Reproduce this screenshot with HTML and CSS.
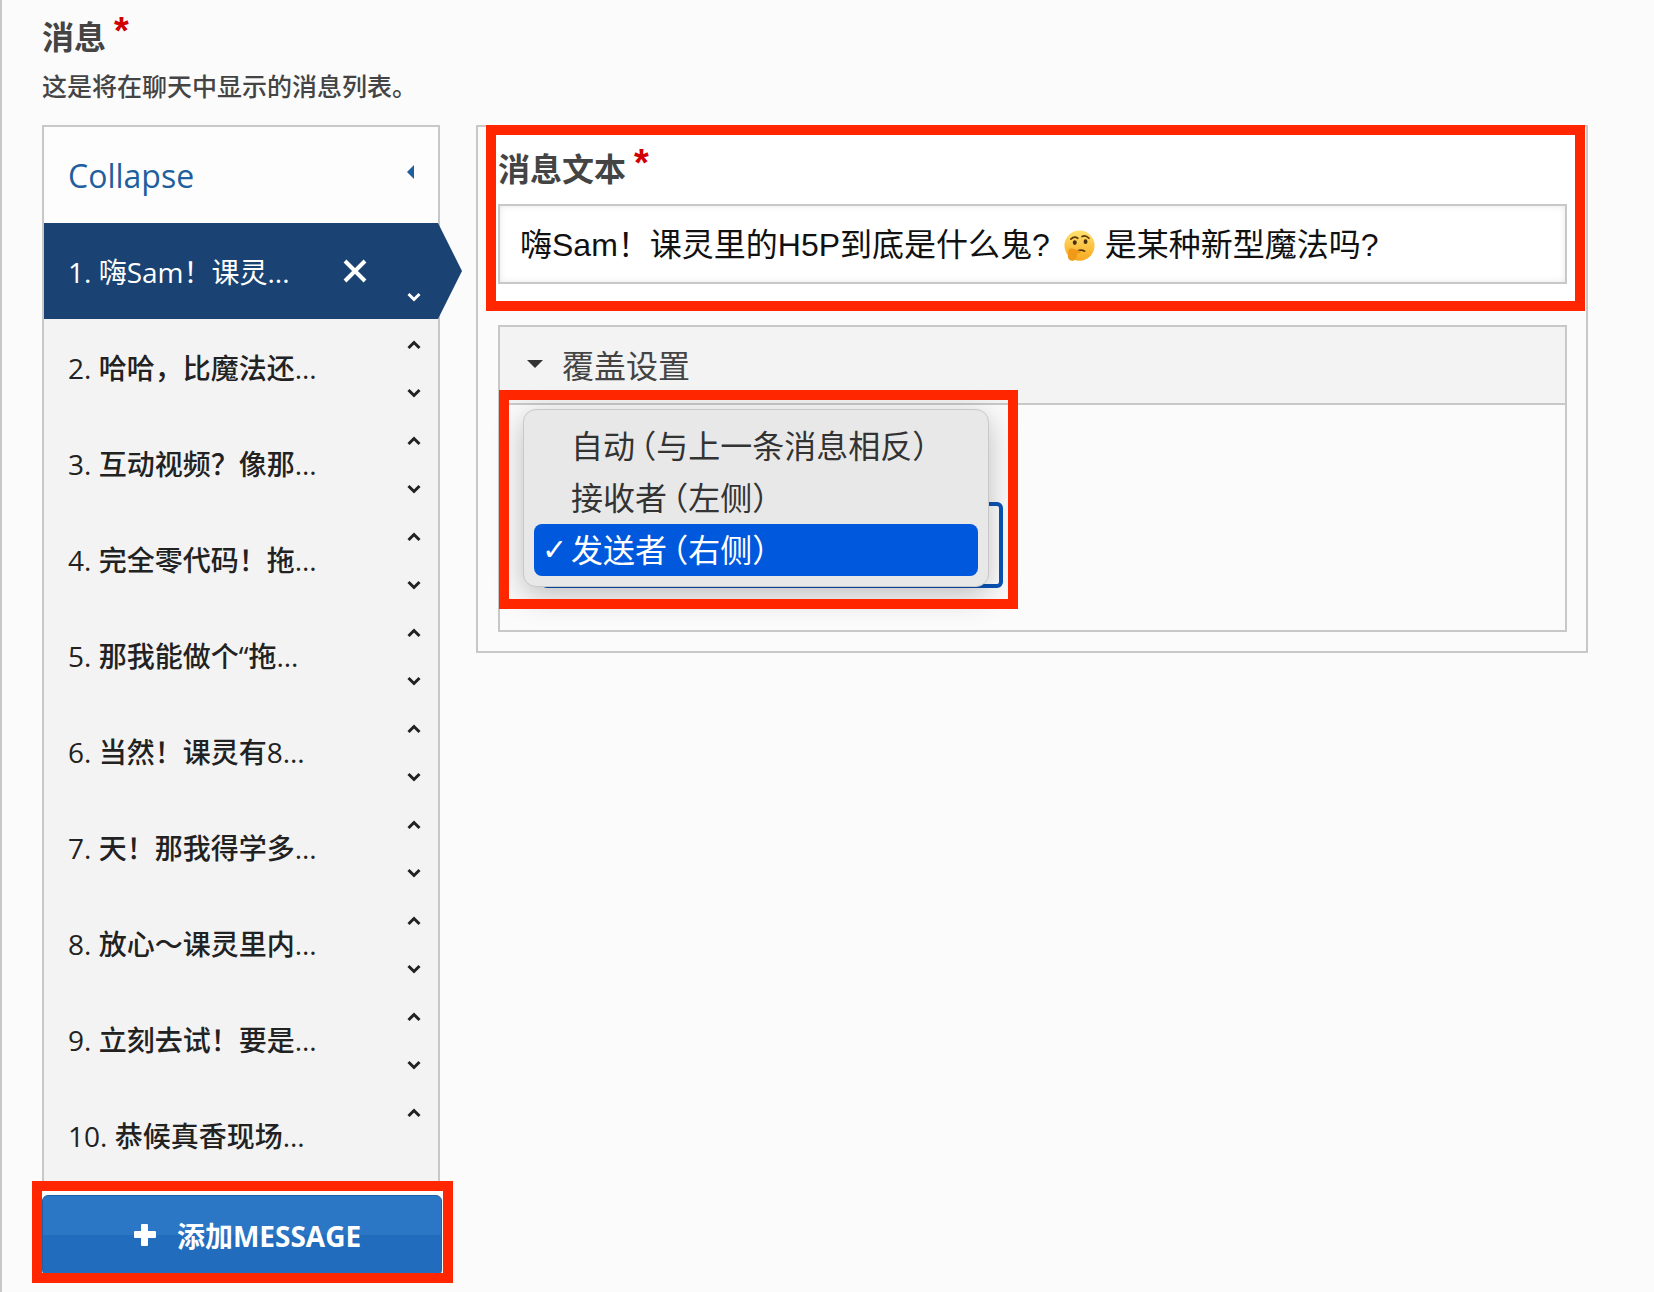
FILE: index.html
```html
<!DOCTYPE html>
<html lang="zh">
<head>
    <meta charset="UTF-8">
    <meta name="viewport" content="width=device-width, initial-scale=1.0">
    <title>消息</title>
    <link rel="stylesheet" href="styles.css">
</head>
<body>
    <svg class="sprites" aria-hidden="true">
        <symbol id="chev-up" viewBox="0 0 14 10"><path d="M1.5 8 7 2.5 12.500 8" fill="none" stroke="currentColor" stroke-width="3"/></symbol>
        <symbol id="chev-down" viewBox="0 0 14 10"><path d="M1.500 2 7 7.500 12.500 2" fill="none" stroke="currentColor" stroke-width="3"/></symbol>
    </svg>
    <div id="page">
        <h2 class="title">消息<span class="req">*</span></h2>
        <p class="desc">这是将在聊天中显示的消息列表。</p>
        <div class="columns">
            <div class="list-col">
                <div class="list">
                    <div class="collapse">
                        <span>Collapse</span>
                        <span class="collapse-arrow"></span>
                    </div>
                    <div class="item active">
                        <span class="item-name">1. 嗨Sam&#xFF01;课灵...</span>
                        <svg class="remove" viewBox="0 0 24 24"><path d="M2 2 22 22M22 2 2 22" fill="none" stroke="currentColor" stroke-width="4"/></svg>
                        <div class="order">
                            <svg class="blank"><use href="#chev-up"/></svg>
                            <svg><use href="#chev-down"/></svg>
                        </div>
                    </div>
                    <div class="item">
                        <span class="item-name">2. 哈哈&#xFF0C;比魔法还...</span>
                        <div class="order"><svg><use href="#chev-up"/></svg><svg><use href="#chev-down"/></svg></div>
                    </div>
                    <div class="item">
                        <span class="item-name">3. 互动视频&#xFF1F;像那...</span>
                        <div class="order"><svg><use href="#chev-up"/></svg><svg><use href="#chev-down"/></svg></div>
                    </div>
                    <div class="item">
                        <span class="item-name">4. 完全零代码&#xFF01;拖...</span>
                        <div class="order"><svg><use href="#chev-up"/></svg><svg><use href="#chev-down"/></svg></div>
                    </div>
                    <div class="item">
                        <span class="item-name">5. 那我能做个“拖...</span>
                        <div class="order"><svg><use href="#chev-up"/></svg><svg><use href="#chev-down"/></svg></div>
                    </div>
                    <div class="item">
                        <span class="item-name">6. 当然&#xFF01;课灵有8...</span>
                        <div class="order"><svg><use href="#chev-up"/></svg><svg><use href="#chev-down"/></svg></div>
                    </div>
                    <div class="item">
                        <span class="item-name">7. 天&#xFF01;那我得学多...</span>
                        <div class="order"><svg><use href="#chev-up"/></svg><svg><use href="#chev-down"/></svg></div>
                    </div>
                    <div class="item">
                        <span class="item-name">8. 放心&#xFF5E;课灵里内...</span>
                        <div class="order"><svg><use href="#chev-up"/></svg><svg><use href="#chev-down"/></svg></div>
                    </div>
                    <div class="item">
                        <span class="item-name">9. 立刻去试&#xFF01;要是...</span>
                        <div class="order"><svg><use href="#chev-up"/></svg><svg><use href="#chev-down"/></svg></div>
                    </div>
                    <div class="item">
                        <span class="item-name">10. 恭候真香现场...</span>
                        <div class="order">
                            <svg><use href="#chev-up"/></svg>
                            <svg class="blank"><use href="#chev-down"/></svg>
                        </div>
                    </div>
                </div>
                <button class="add-btn">
                    <span class="plus"></span>
                    <span>添加MESSAGE</span>
                </button>
            </div>
            <div class="editor">
                <div class="field">
                    <label class="field-label">消息文本<span class="req">*</span></label>
                    <div class="text-input">嗨Sam&#xFF01;课灵里的H5P到底是什么鬼?<svg class="emoji" viewBox="0 0 36 36">
                            <defs>
                                <linearGradient id="face" x1="0" y1="0" x2="0" y2="1">
                                    <stop offset="0" stop-color="#ffe270"/>
                                    <stop offset="1" stop-color="#f8a91f"/>
                                </linearGradient>
                            </defs>
                            <circle cx="18" cy="17.500" r="17.500" fill="url(#face)"/>
                            <path d="M8 10q4-4 8-1M21 7q4-2 8 2" fill="none" stroke="#5b3a12" stroke-width="2" stroke-linecap="round"/>
                            <ellipse cx="12.500" cy="14" rx="2.300" ry="2.800" fill="#4a2f10"/>
                            <ellipse cx="25" cy="13" rx="2.300" ry="2.800" fill="#4a2f10"/>
                            <path d="M15 24q5-2.500 9 0" fill="none" stroke="#5b3a12" stroke-width="2" stroke-linecap="round"/>
                            <path d="M5 24c0-3 3-4 5-3l8 2.500c2 .5 2 2.500 0 3l-3 .5c1 2 0 6-4 8-4 1-7-2-6.500-6z" fill="#f09a1a"/>
                        </svg>是某种新型魔法吗?</div>
                </div>
                <div class="group">
                    <div class="group-head">
                        <span class="group-arrow"></span>
                        <span>覆盖设置</span>
                    </div>
                    <div class="group-body">
                        <div class="select">
                            <div class="menu">
                                <div class="menu-item">自动&#x2009;&#xFF08;与上一条消息相反&#xFF09;</div>
                                <div class="menu-item">接收者&#x2009;&#xFF08;左侧&#xFF09;</div>
                                <div class="menu-item selected"><span class="check">✓</span>发送者&#x2009;&#xFF08;右侧&#xFF09;</div>
                            </div>
                            <div class="mark"></div>
                        </div>
                    </div>
                </div>
            </div>
        </div>
    </div>
</body>
</html>
```

FILE: styles.css
```css
* {
    box-sizing: border-box;
}

body {
    margin: 0;
    background: #fbfbfb;
    color: #444;
    font-family: 'Open Sans', 'Noto Sans CJK SC', sans-serif;
}

.sprites {
    display: none;
}

#page {
    width: 1654px;
    height: 1292px;
    border-left: 2px solid #c8c8c8;
    padding: 17px 66px 0 40px;
    overflow: hidden;
}

.title {
    margin: 0;
    font-size: 32px;
    line-height: 40px;
    font-weight: 700;
}

.req {
    color: #d00000;
    font-size: 38px;
    line-height: 0;
    margin-left: 8px;
    vertical-align: 5px;
    font-family: 'Liberation Sans', sans-serif;
    font-weight: 700;
}

.desc {
    margin: 14px 0 24px;
    font-size: 25px;
    line-height: 30px;
    font-weight: 500;
}

.columns {
    display: flex;
    gap: 33px;
    align-items: flex-start;
}

.list-col {
    width: 401px;
    flex: none;
}

.list {
    width: 398px;
    border: 2px solid #c8c8c8;
    border-bottom: none;
    background: #f3f3f3;
}

.collapse {
    height: 96px;
    background: #fdfdfd;
    padding: 0 24px 0 24px;
    display: flex;
    align-items: center;
    justify-content: space-between;
    font-size: 32px;
    color: #1f5f9e;
}

.collapse-arrow {
    width: 0;
    height: 0;
    border-top: 7px solid transparent;
    border-bottom: 7px solid transparent;
    border-right: 7px solid #1f5f9e;
    margin-bottom: 6px;
}

.item {
    position: relative;
    height: 96px;
    padding-left: 24px;
    display: flex;
    align-items: center;
    font-size: 28px;
    color: #222;
}

.item-name {
    flex: 1;
    white-space: nowrap;
    font-weight: 500;
}

.item.active {
    background: #1a4373;
    color: #fff;
}

.item.active .item-name {
    font-weight: 400;
}

.item.active::after {
    content: "";
    position: absolute;
    top: 0;
    right: -24px;
    border-top: 48px solid transparent;
    border-bottom: 48px solid transparent;
    border-left: 24px solid #1a4373;
}

.remove {
    width: 24px;
    height: 24px;
    margin-right: 40px;
}

.order {
    width: 14px;
    margin-right: 17px;
    height: 96px;
    padding-top: 21px;
    display: flex;
    flex-direction: column;
    gap: 38px;
}

.order svg {
    width: 14px;
    height: 10px;
    display: block;
}

.order .blank {
    visibility: hidden;
}

.add-btn {
    position: relative;
    display: flex;
    align-items: center;
    justify-content: center;
    gap: 21px;
    width: 400px;
    height: 81px;
    margin-top: 12px;
    padding: 0 0 2px 11px;
    border: 1px solid #1f5fa8;
    border-radius: 6px;
    background: linear-gradient(#2b76c5 0, #2b76c5 50%, #216cbd 50%, #216cbd 100%);
    color: #fff;
    font-family: inherit;
    font-size: 28px;
    font-weight: 700;
}

/* red annotation frame */
.add-btn::after {
    content: "";
    position: absolute;
    top: -15px;
    left: -11px;
    right: -12px;
    bottom: -8px;
    border: 10px solid #ff2600;
}

.plus {
    position: relative;
    width: 22px;
    height: 22px;
}

.plus::before,
.plus::after {
    content: "";
    position: absolute;
    background: #fff;
    border-radius: 1px;
}

.plus::before {
    left: 0;
    right: 0;
    top: 7.500px;
    height: 7px;
}

.plus::after {
    top: 0;
    bottom: 0;
    left: 7.500px;
    width: 7px;
}

.editor {
    flex: 1;
    min-width: 0;
    height: 528px;
    border: 2px solid #c8c8c8;
    padding: 0 19px 0 20px;
}

.field {
    position: relative;
    z-index: 0;
}

.field::before {
    content: "";
    position: absolute;
    z-index: -1;
    top: -2px;
    left: -12px;
    right: -18px;
    bottom: -27px;
    border: 10px solid #ff2600;
    background: #fff;
}

.field-label {
    display: block;
    padding-top: 22px;
    margin-bottom: 15px;
    font-size: 32px;
    line-height: 40px;
    font-weight: 700;
}

.text-input {
    height: 80px;
    padding-left: 20px;
    border: 2px solid #c8c8c8;
    background: #fff;
    box-shadow: inset 0 0 6px rgba(0, 0, 0, 0.1);
    color: #111;
    font-family: 'Liberation Sans', 'Noto Sans CJK SC', sans-serif;
    font-size: 32px;
    line-height: 78px;
    white-space: nowrap;
}

.emoji {
    display: inline-block;
    width: 31px;
    height: 32px;
    margin-left: 14px;
    margin-right: 10px;
    vertical-align: -6px;
}

.group {
    margin-top: 41px;
    border: 2px solid #c8c8c8;
    height: 307px;
}

.group-head {
    height: 78px;
    display: flex;
    align-items: center;
    gap: 19px;
    padding: 0 0 2px 27px;
    background: #f3f3f3;
    border-bottom: 2px solid #c8c8c8;
    font-size: 32px;
    font-weight: 400;
}

.group-arrow {
    width: 0;
    height: 0;
    border-left: 8.500px solid transparent;
    border-right: 8.500px solid transparent;
    border-top: 8.500px solid #333;
}

.group-body {
    padding: 97px 0 0 41px;
}

.select {
    position: relative;
    width: 462px;
    height: 86px;
    border: 4px solid #0a53b8;
    border-radius: 6px;
    background: #fff;
}

.menu {
    position: absolute;
    top: -97px;
    left: -22px;
    width: 466px;
    height: 178px;
    padding: 10px;
    border: 1px solid #c8c8c8;
    border-radius: 13px;
    background: #e8e8e8;
    box-shadow: 0 8px 30px rgba(0, 0, 0, 0.25);
    font-size: 32px;
    color: #333;
    font-feature-settings: "halt";
}

.menu-item {
    position: relative;
    height: 52px;
    line-height: 52px;
    padding-left: 37px;
    border-radius: 8px;
    white-space: nowrap;
}

.menu-item.selected {
    background: #0058dd;
    color: #fff;
}

.check {
    position: absolute;
    left: 8px;
    font-size: 30px;
    font-weight: 700;
    font-family: 'DejaVu Sans', sans-serif;
}

.mark {
    position: absolute;
    top: -116px;
    left: -46px;
    width: 519px;
    height: 219px;
    border: 10px solid #ff2600;
}
```
